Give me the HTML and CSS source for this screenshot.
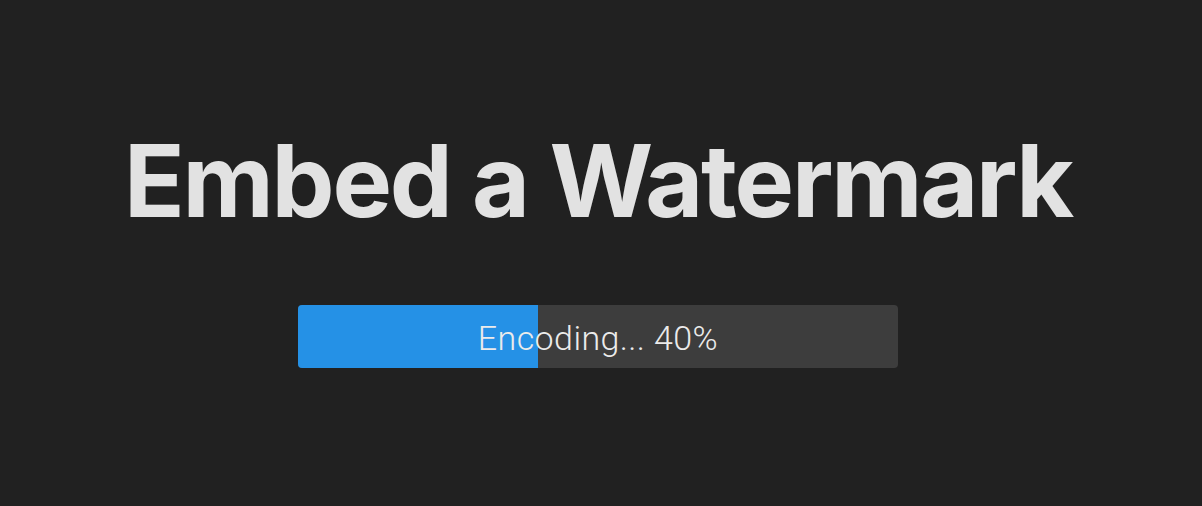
FILE: index.html
```html
<!DOCTYPE html>
<html lang="en">
<head>
<meta charset="utf-8">
<title>Embed a Watermark</title>
<link rel="stylesheet" href="styles.css">
</head>
<body>
<main class="page">
  <h1 class="title">Embed a Watermark</h1>
  <div class="progress">
    <div class="progress-fill" style="width: 40%"></div>
    <span class="progress-label">Encoding... 40%</span>
  </div>
</main>
</body>
</html>
```
FILE: styles.css
```css
html, body {
  margin: 0;
  padding: 0;
  background: #212121;
}
.page {
  height: 506px;
  box-sizing: border-box;
  padding: 121px 6px 0 0;
  display: flex;
  flex-direction: column;
  align-items: center;
  font-family: Inter, "Noto Sans", sans-serif;
}
.title {
  margin: 0;
  font-size: 100px;
  line-height: 120px;
  font-weight: 700;
  color: #e2e2e2;
  letter-spacing: -2.2px;
}
.progress {
  position: relative;
  margin-top: 64px;
  width: 600px;
  height: 63px;
  border-radius: 4px;
  background: #3d3d3d;
  overflow: hidden;
  display: flex;
  align-items: center;
  justify-content: center;
}
.progress-fill {
  position: absolute;
  left: 0;
  top: 0;
  bottom: 0;
  background: #2591e6;
}
.progress-label {
  position: relative;
  font-family: Roboto, Inter, sans-serif;
  font-weight: 300;
  font-size: 34px;
  letter-spacing: 0.4px;
  color: #ebebeb;
  top: 1px;
}
```
